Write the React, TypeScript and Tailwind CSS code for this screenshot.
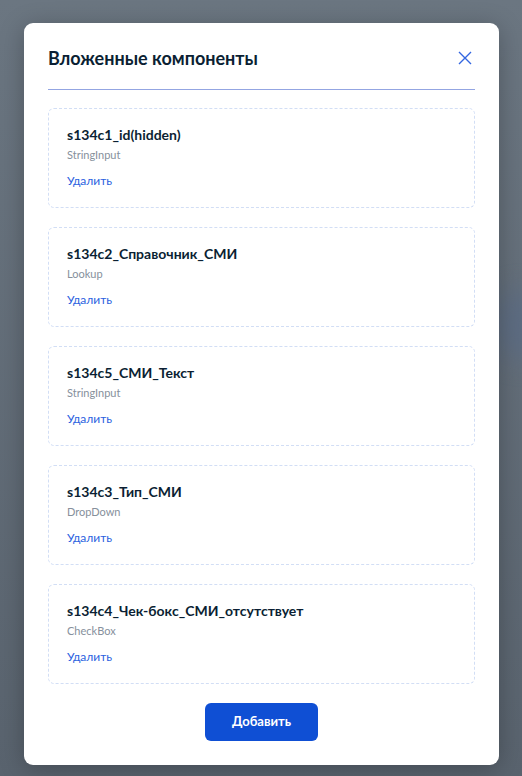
import React from "react";

const items = [
  { name: "s134c1_id(hidden)", type: "StringInput" },
  { name: "s134c2_Справочник_СМИ", type: "Lookup" },
  { name: "s134c5_СМИ_Текст", type: "StringInput" },
  { name: "s134c3_Тип_СМИ", type: "DropDown" },
  { name: "s134c4_Чек-бокс_СМИ_отсутствует", type: "CheckBox" },
];

export default function App() {
  return (
    <div
      className="relative w-[522px] h-[776px] overflow-hidden bg-gradient-to-b from-[#6b7681] to-[#59636e] pt-[23px] pl-[24px]"
      style={{ fontFamily: "Lato, 'Noto Sans', sans-serif" }}
    >
      <div className="absolute right-[-30px] top-[290px] w-[60px] h-[70px] rounded-full bg-[#5a6b85] blur-[14px] opacity-70" />
      <div className="relative w-[475px] h-[742px] bg-white rounded-[9px] shadow-[0_4px_24px_rgba(0,0,0,0.25)] px-[24px] pt-[22px] pb-[24px] flex flex-col">
        <div className="shrink-0 flex items-center justify-between h-[26px]">
          <h2 className="text-[18px] leading-[26px] font-bold text-[#0b1f33]">Вложенные компоненты</h2>
          <svg width="16" height="16" viewBox="0 0 16 16" className="mr-[2px]">
            <path d="M2 2 L14 14 M14 2 L2 14" stroke="#3366e0" strokeWidth="1.4" fill="none" />
          </svg>
        </div>
        <div className="shrink-0 mt-[18px] h-px bg-[#93a5e2]" />
        <div className="shrink-0 mt-[18px] flex flex-col gap-[19px]">
          {items.map((it) => (
            <div
              key={it.name}
              className="shrink-0 h-[100px] border border-dashed border-[#d2def5] rounded-[6px] pl-[18px] pt-[16px]"
            >
              <div className="text-[14px] leading-[20px] font-bold text-[#0b1f33]">{it.name}</div>
              <div className="mt-[2px] text-[11px] leading-[16px] text-[#86909c]">{it.type}</div>
              <div className="mt-[10px] text-[12px] leading-[16px] text-[#2b62e0]">Удалить</div>
            </div>
          ))}
        </div>
        <div className="shrink-0 mt-[19px] flex justify-center">
          <button className="w-[113px] h-[38px] rounded-[6px] bg-[#0f4fd4] text-white text-[13px] font-bold">
            Добавить
          </button>
        </div>
      </div>
    </div>
  );
}
